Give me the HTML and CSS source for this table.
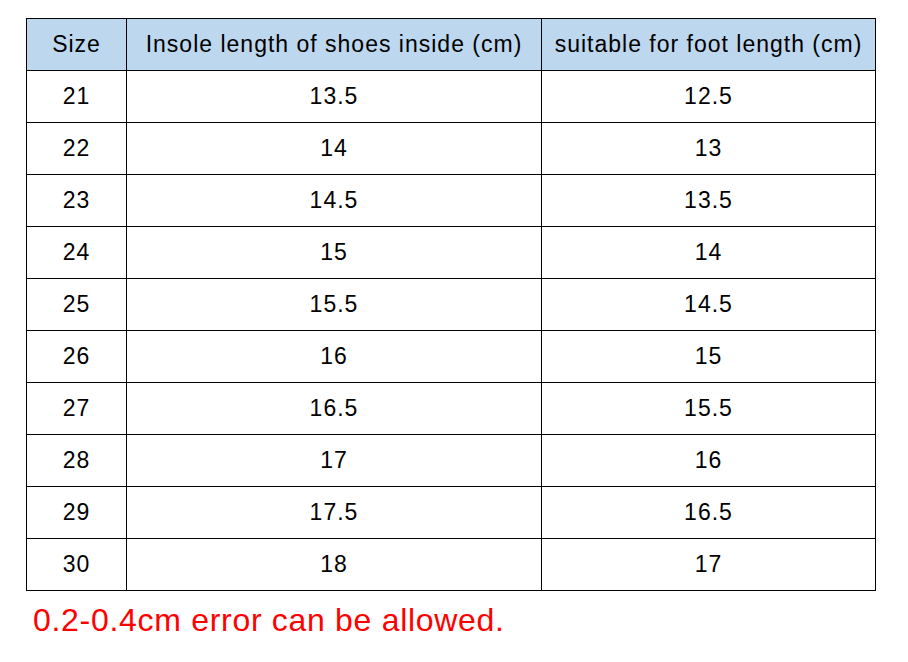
FILE: index.html
```html
<!DOCTYPE html>
<html>
<head>
<meta charset="utf-8">
<link rel="stylesheet" href="styles.css">
</head>
<body>
<div class="page">
  <table class="size-table">
    <colgroup>
      <col class="c1"><col class="c2"><col class="c3">
    </colgroup>
    <thead>
      <tr><th>Size</th><th>Insole length of shoes inside (cm)</th><th>suitable for foot length (cm)</th></tr>
    </thead>
    <tbody>
      <tr><td>21</td><td>13.5</td><td>12.5</td></tr>
      <tr><td>22</td><td>14</td><td>13</td></tr>
      <tr><td>23</td><td>14.5</td><td>13.5</td></tr>
      <tr><td>24</td><td>15</td><td>14</td></tr>
      <tr><td>25</td><td>15.5</td><td>14.5</td></tr>
      <tr><td>26</td><td>16</td><td>15</td></tr>
      <tr><td>27</td><td>16.5</td><td>15.5</td></tr>
      <tr><td>28</td><td>17</td><td>16</td></tr>
      <tr><td>29</td><td>17.5</td><td>16.5</td></tr>
      <tr><td>30</td><td>18</td><td>17</td></tr>
    </tbody>
  </table>
  <p class="note">0.2-0.4cm error can be allowed.</p>
</div>
</body>
</html>
```

FILE: styles.css
```css
html, body {
  margin: 0;
  padding: 0;
  background: #ffffff;
}
.page {
  padding: 18px 0 0 26px;
  font-family: "Liberation Sans", Arial, sans-serif;
}
.size-table {
  border-collapse: collapse;
  table-layout: fixed;
  width: 849px;
}
.c1 { width: 100px; }
.c2 { width: 415px; }
.c3 { width: 334px; }
.size-table th,
.size-table td {
  border: 1px solid #000;
  height: 51px;
  padding: 0;
  text-align: center;
  vertical-align: middle;
  font-size: 23px;
  font-weight: normal;
  letter-spacing: 1px;
  color: #000;
}
.size-table th {
  background: #bdd7ee;
}
.note {
  margin: 11px 0 0 7px;
  font-size: 32px;
  letter-spacing: 0.7px;
  color: #f00;
}
```
